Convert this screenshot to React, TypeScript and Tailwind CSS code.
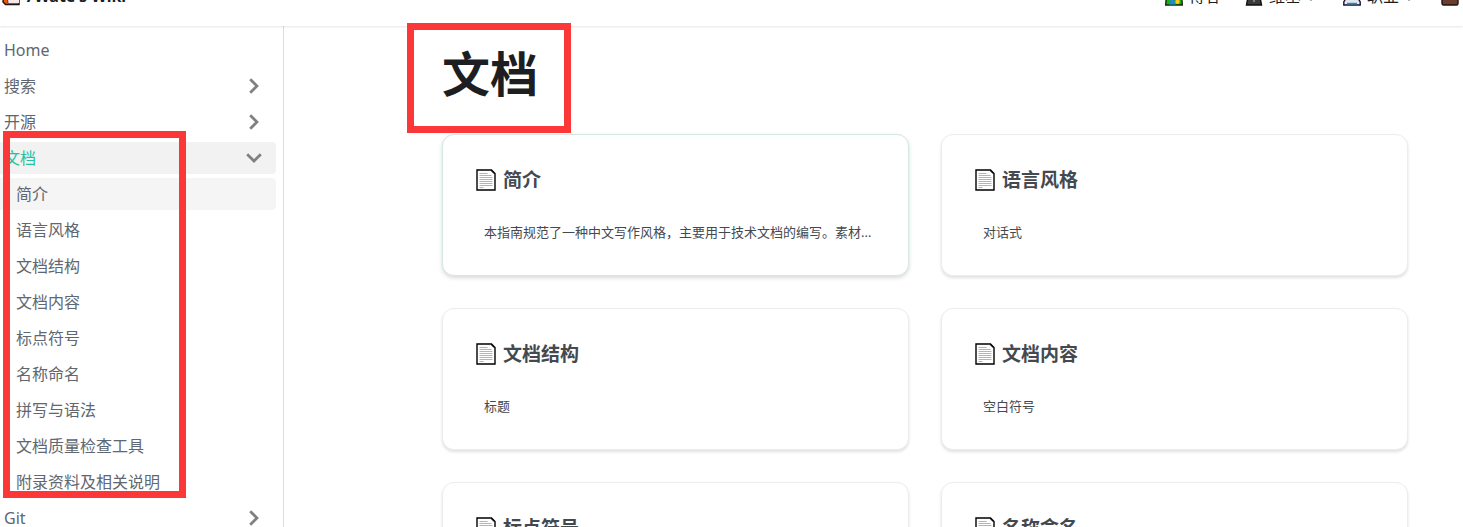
import React from 'react';

interface SideItem {
  label: string;
  children?: string[];
  open?: boolean;
  leaf?: boolean;
}

interface DocCard {
  title: string;
  description: string;
  active?: boolean;
}

const sideItems: SideItem[] = [
  { label: 'Home', leaf: true },
  { label: '搜索' },
  { label: '开源' },
  {
    label: '文档',
    open: true,
    children: [
      '简介',
      '语言风格',
      '文档结构',
      '文档内容',
      '标点符号',
      '名称命名',
      '拼写与语法',
      '文档质量检查工具',
      '附录资料及相关说明',
    ],
  },
  { label: 'Git' },
];

const cards: DocCard[] = [
  { title: '简介', description: '本指南规范了一种中文写作风格，主要用于技术文档的编写。素材...', active: true },
  { title: '语言风格', description: '对话式' },
  { title: '文档结构', description: '标题' },
  { title: '文档内容', description: '空白符号' },
  { title: '标点符号', description: '标点符号' },
  { title: '名称命名', description: '名称命名' },
];

const Chevron: React.FC<{ open?: boolean }> = ({ open }) => (
  <svg
    viewBox="0 0 20 20"
    className={open ? 'w-5 h-5 rotate-90' : 'w-5 h-5'}
    fill="none"
    stroke="#808080"
    strokeWidth="2.7"
    aria-hidden="true"
  >
    <path d="M6.2 3.2L13 10l-6.8 6.8" />
  </svg>
);

const PageIcon: React.FC = () => (
  <svg viewBox="0 0 20 22" className="w-5 h-[22px] shrink-0" aria-hidden="true">
    <path d="M1 1h14.5L19 4.5V21H1z" fill="#fff" stroke="#000" strokeWidth="1.4" />
    <path d="M15 1v1l2.5 2.5h1.5z" fill="#000" />
    <path
      d="M3.5 4.5h8M3.5 6.5h12M3.5 8.5h13M3.5 10.5h13M3.5 12.5h13M3.5 14.5h13M3.5 16.5h13M3.5 18.5h4"
      stroke="#b4b4b4"
    />
  </svg>
);

const LogoIcon: React.FC = () => (
  <svg viewBox="0 0 20 20" className="w-5 h-5" aria-hidden="true">
    <path d="M3 1h15v17.5H4.5L2 16z" fill="#e8590c" stroke="#1c1410" strokeWidth="1.4" />
    <path d="M7 2v15h11V2z" fill="#f6e9ee" />
    <path d="M5 1.5L7 17" stroke="#8c3208" />
  </svg>
);

const MapIcon: React.FC = () => (
  <svg viewBox="0 0 18 20" className="w-[18px] h-5" aria-hidden="true">
    <path d="M2 1h14l1.3 18H.7z" fill="#16b50e" stroke="#17260f" strokeWidth="1.4" />
    <path d="M6 12l4 3 1 3.5H4z" fill="#2589c9" />
    <circle cx="12.5" cy="15.8" r="2.2" fill="#ffca1c" />
  </svg>
);

const SuitIcon: React.FC = () => (
  <svg viewBox="0 0 18 20" className="w-[18px] h-5" aria-hidden="true">
    <path d="M3 11h12l1.5 8h-15z" fill="#3b3b3d" stroke="#111" strokeWidth="1.4" />
    <path d="M9 12v4" stroke="#999" strokeWidth="1.5" />
  </svg>
);

const LaptopIcon: React.FC = () => (
  <svg viewBox="0 0 18 20" className="w-[18px] h-5" aria-hidden="true">
    <path d="M3 12h12l2.2 4v3H.8v-3z" fill="#e5e5ec" stroke="#181238" strokeWidth="1.4" />
    <path d="M4 17.5h10" stroke="#159ac6" strokeWidth="1.5" />
  </svg>
);

const CaseIcon: React.FC = () => (
  <svg viewBox="0 0 18 20" className="w-[18px] h-5" aria-hidden="true">
    <rect x="1" y="5" width="16" height="14" rx="1.5" fill="#6a3d2e" stroke="#21130e" strokeWidth="1.4" />
  </svg>
);

const Caret: React.FC = () => (
  <svg viewBox="0 0 8 6" className="ml-1.5 w-2 h-1.5 mt-1" aria-hidden="true">
    <path d="M0 0h8L4 6z" fill="#1c1e21" />
  </svg>
);

const Navbar: React.FC = () => (
  <header className="relative z-10 flex h-[26px] items-end overflow-hidden bg-white shadow-[0_1px_2px_0_rgba(0,0,0,0.1)]">
    <div className="flex h-15 w-full shrink-0 items-center justify-between pb-px pl-px pr-1 text-base text-[#1c1e21]">
      <a href="#home" className="flex items-center gap-1 font-bold">
        <LogoIcon />
        7Wate's Wiki
      </a>
      <nav className="flex items-center gap-6">
        <a href="#blog" className="flex items-center gap-1.5">
          <MapIcon />
          博客
        </a>
        <a href="#wiki" className="flex items-center">
          <SuitIcon />
          <span className="ml-1.5">维基</span>
          <Caret />
        </a>
        <a href="#career" className="ml-1 flex items-center">
          <LaptopIcon />
          <span className="ml-1.5">职业</span>
          <Caret />
        </a>
        <a href="#more" aria-label="更多" className="ml-1">
          <CaseIcon />
        </a>
      </nav>
    </div>
  </header>
);

const Sidebar: React.FC = () => (
  <aside className="w-71 shrink-0 border-r border-[#dadde1] pt-2 pr-[7px] text-base text-[#606770]">
    <ul className="space-y-1">
      {sideItems.map((item) => (
        <li key={item.label}>
          <a
            href={`#${item.label}`}
            className={
              item.open
                ? 'flex h-8 items-center justify-between rounded-r bg-[#f2f2f2] pl-1 pr-3 text-[#25c2a0]'
                : 'flex h-8 items-center justify-between pl-1 pr-3'
            }
          >
            {item.label}
            {!item.leaf && <Chevron open={item.open} />}
          </a>
          {item.children && (
            <ul className="mt-1 space-y-1">
              {item.children.map((child, i) => (
                <li key={child}>
                  <a
                    href={`#${child}`}
                    className={
                      i === 0
                        ? 'flex h-8 items-center rounded-r bg-[#f5f5f5] pl-4'
                        : 'flex h-8 items-center pl-4'
                    }
                  >
                    {child}
                  </a>
                </li>
              ))}
            </ul>
          )}
        </li>
      ))}
    </ul>
  </aside>
);

const Card: React.FC<DocCard> = ({ title, description, active }) => (
  <a
    href={`#${title}`}
    className={
      active
        ? 'block h-[142px] min-w-0 rounded-xl border border-[#d3e7e3] bg-white px-[33px] pt-[33px] text-[#444950] shadow-[0_2px_4px_0_rgba(0,0,0,0.15)]'
        : 'block h-[142px] min-w-0 rounded-xl border border-[#ebedf0] bg-white px-[33px] pt-[33px] text-[#444950] shadow-[0_2px_3px_0_rgba(0,0,0,0.12)]'
    }
  >
    <h2 className="flex h-6 items-center gap-[7px] text-[19px] font-bold">
      <PageIcon />
      {title}
    </h2>
    <p className="mt-[30px] truncate pl-2 text-[13px] leading-5">{description}</p>
  </a>
);

export default function App() {
  return (
    <div className="relative flex h-screen flex-col overflow-hidden bg-white font-['Noto_Sans','Noto_Sans_CJK_SC',sans-serif]">
      <Navbar />
      <div className="flex min-h-0 flex-1">
        <Sidebar />
        <main className="min-w-0 flex-1 pt-[18px] pl-[158px] pr-[55px]">
          <h1 className="mb-[30px] text-5xl leading-15 font-bold text-[#1c1e21]">文档</h1>
          <section className="grid grid-cols-2 gap-8">
            {cards.map((card) => (
              <Card key={card.title} {...card} />
            ))}
          </section>
        </main>
      </div>

      {/* red highlight frames */}
      <div className="pointer-events-none absolute top-[23px] left-[407px] z-20 h-[110px] w-41 border-7 border-[#fc3737]" />
      <div className="pointer-events-none absolute top-[131px] left-[3px] z-20 h-[367px] w-[183px] border-7 border-[#fc3737]" />
    </div>
  );
}
